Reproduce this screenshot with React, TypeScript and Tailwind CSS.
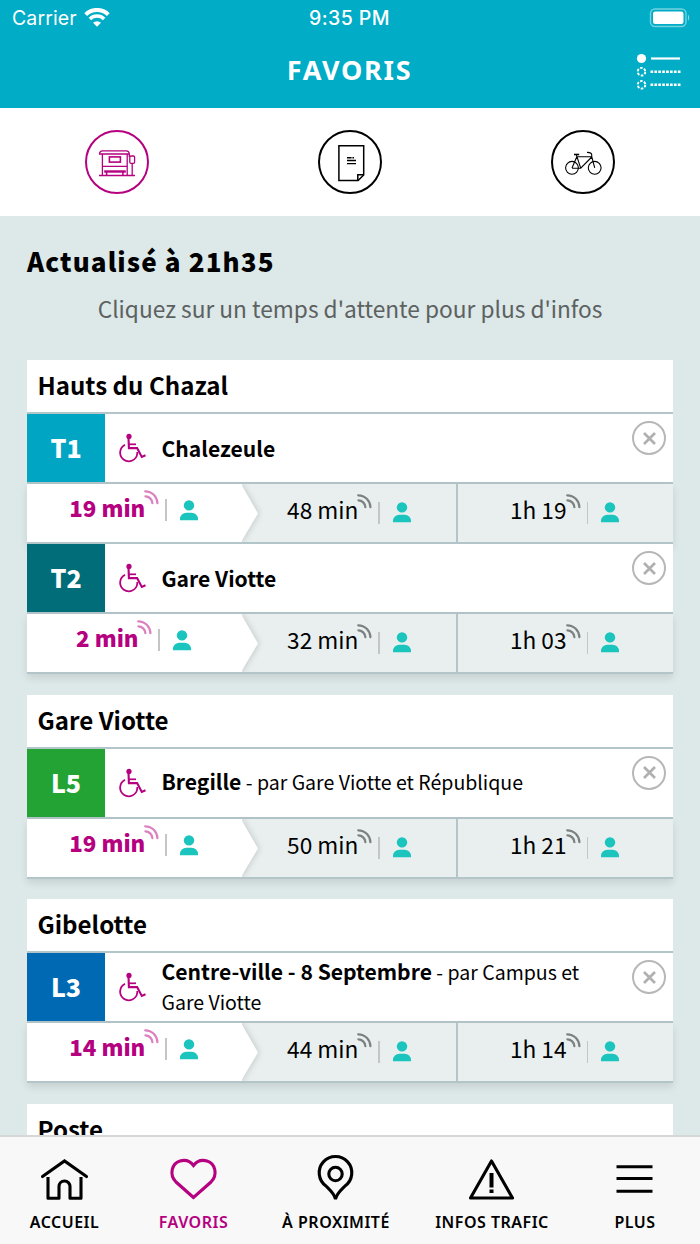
import React from 'react';
import clsx from 'clsx';

interface Line {
  code: string;
  color: string;
  direction: string;
  via?: string;
  times: string[];
}

interface Stop {
  name: string;
  lines: Line[];
}

const STOPS: Stop[] = [
  {
    name: 'Hauts du Chazal',
    lines: [
      { code: 'T1', color: 'bg-[#00a5c3]', direction: 'Chalezeule', times: ['19 min', '48 min', '1h 19'] },
      { code: 'T2', color: 'bg-[#006d78]', direction: 'Gare Viotte', times: ['2 min', '32 min', '1h 03'] },
    ],
  },
  {
    name: 'Gare Viotte',
    lines: [
      {
        code: 'L5',
        color: 'bg-[#22a334]',
        direction: 'Bregille',
        via: 'par Gare Viotte et République',
        times: ['19 min', '50 min', '1h 21'],
      },
    ],
  },
  {
    name: 'Gibelotte',
    lines: [
      {
        code: 'L3',
        color: 'bg-[#0069b4]',
        direction: 'Centre-ville - 8 Septembre',
        via: 'par Campus et Gare Viotte',
        times: ['14 min', '44 min', '1h 14'],
      },
    ],
  },
  { name: 'Poste', lines: [] },
];

function StatusBar() {
  return (
    <div className="grid h-9 grid-cols-3 items-center px-3 font-['Inter'] text-[19.5px] leading-9 text-white">
      <div className="flex items-center gap-[7px]">
        <span className="tracking-[0.1px]">Carrier</span>
        <svg width="26" height="19" viewBox="0 0 26 19" className="-mt-0.5" fill="none" stroke="#fff">
          <path d="M1.7 6.6a16 16 0 0 1 22.6 0" strokeWidth="4" />
          <path d="M5.9 11a10 10 0 0 1 14.2 0" strokeWidth="3.6" />
          <path d="M13 18.8l-4-4a5.7 5.7 0 0 1 8 0z" fill="#fff" stroke="none" />
        </svg>
      </div>
      <span className="-ml-px text-center font-medium tracking-[0.4px]">9:35 PM</span>
      <svg width="42" height="20" viewBox="0 0 42 20" className="-mr-[3px] justify-self-end">
        <rect x="1.5" y="1" width="35.5" height="17.5" rx="4.5" fill="none" stroke="#fff" strokeOpacity=".45" strokeWidth="1.4" />
        <rect x="4" y="3.5" width="30.5" height="12.5" rx="2.2" fill="#fff" />
        <path d="M39 6.500q2.600 3 0 6.500z" fill="#fff" fillOpacity=".5" />
      </svg>
    </div>
  );
}

function ListIcon() {
  return (
    <svg width="46" height="38" viewBox="0 0 46 38" className="mt-[4px]" fill="none" stroke="#fff">
      <circle cx="5.5" cy="5.5" r="4.6" fill="#fff" stroke="none" />
      <path d="M15 5.5h29" strokeWidth="2.2" />
      <circle cx="5.5" cy="18.7" r="3.8" strokeWidth="1.9" strokeDasharray="2.6 1.4" />
      <path d="M14.5 18.7h30.5" strokeWidth="2.4" strokeDasharray="2.7 1.2" />
      <circle cx="5.5" cy="31.8" r="3.8" strokeWidth="1.9" strokeDasharray="2.6 1.4" />
      <path d="M14.5 31.8h30.5" strokeWidth="2.4" strokeDasharray="2.7 1.2" />
    </svg>
  );
}

function ShelterIcon() {
  return (
    <svg width="40" height="30" viewBox="0 0 40 30" fill="none" stroke="#b5007f" strokeWidth="1.3">
      <path d="M2.6 7V6.2Q3 3.8 5.6 3.8h23.600q2.600 0 3 2.400V7z" />
      <path d="M5.4 7v21.5M30.2 7v21.5M32.3 7v3M5.4 19.3h24.8M2 28.5h36" />
      <rect x="12.4" y="9.9" width="11" height="5.2" strokeWidth="1.6" />
      <path d="M7.2 24.5h21.6" strokeWidth="2.4" />
      <path d="M9.6 25v3.5M25.9 25v3.5" strokeWidth="1.5" />
      <rect x="32.8" y="9" width="4.8" height="7.3" rx="1.2" />
      <path d="M35.2 16.3v12.2" />
    </svg>
  );
}

function SheetIcon() {
  return (
    <svg width="34" height="42" viewBox="0 0 34 42" className="shrink-0" fill="none" stroke="#000" strokeWidth="1.5">
      <path d="M5.9 4.8h24.8v29.2l-5.6 5.5H5.9z" />
      <path d="M30.7 33.8h-5.9v5.7" />
      <path d="M14 16.7h4.6M19.4 16.7h1.600M14 19.5h9M14 22.6h9" strokeWidth="1.4" />
    </svg>
  );
}

function BikeIcon() {
  return (
    <svg width="40" height="26" viewBox="0 0 40 26" fill="none" stroke="#000" strokeWidth="1.1">
      <circle cx="9" cy="18.8" r="6.4" />
      <circle cx="31.7" cy="18.8" r="6.4" />
      <path d="M9 19L13.8 7.7M17.7 19.2L13.4 6M9 19.2h8.7L28.8 8M14 7.7h14.7M31.7 18.8L28.7 7.5V5.5Q28.3 3.2 24 3.4" />
      <path d="M11 5.5h5.2" strokeWidth="1.6" />
    </svg>
  );
}

function WheelchairIcon() {
  return (
    <svg width="28" height="30" viewBox="0 0 28 30" fill="none" stroke="#b5007f" strokeWidth="1.8">
      <circle cx="10" cy="3.4" r="2.6" fill="#b5007f" stroke="none" />
      <path d="M9.5 4.5l.4 10.6h8.2l4.7 8.9 3.7-1.7" strokeWidth="2.1" />
      <path d="M9.7 11.3h7.3" strokeWidth="1.7" />
      <path d="M6 11.9a8.6 8.6 0 1 0 12.3 8.6v-1.500" />
    </svg>
  );
}

function SignalIcon() {
  return (
    <svg width="15" height="15" viewBox="0 0 15 15" fill="none" stroke="currentColor" strokeWidth="2.2" strokeLinecap="round">
      <path d="M1.2 1.3C8 1.3 13.2 6.6 13.4 13.2" />
      <path d="M1.4 6.3C5 6.3 8.3 9.6 8.4 13.2" />
    </svg>
  );
}

function PersonIcon() {
  return (
    <svg width="18" height="21" viewBox="0 0 18 21" fill="#1bc5bd">
      <circle cx="9" cy="5.4" r="5.2" />
      <path d="M0 20.3v-1.2a6.4 6.4 0 0 1 6.4-6.4h5.2a6.4 6.4 0 0 1 6.4 6.4v1.2z" />
    </svg>
  );
}

// White tip of the first waiting time, laid over the second cell
function Arrow() {
  return (
    <svg width="26" height="58" viewBox="0 0 26 58" className="absolute left-0 top-0">
      <path
        d="M-4 -4L-1 0L16 29.5L-1 58L-4 62z"
        fill="#fff"
        className="[filter:drop-shadow(1px_0_3px_rgba(0,0,0,0.16))]"
      />
    </svg>
  );
}

function TimeCell({ label, index }: { label: string; index: number }) {
  const next = index === 0;

  return (
    <div
      className={clsx(
        'relative flex justify-center',
        next ? 'bg-white pr-[2px] pt-[6px]' : 'bg-[#e9efef] pt-[8px]',
        index === 2 && 'border-l-2 border-[#b3c5c8] pr-[2px]'
      )}
    >
      {index === 1 && <Arrow />}
      <span
        className={clsx(
          'relative whitespace-pre leading-[35px]',
          next ? 'text-[22.3px] font-black text-[#b5007f]' : 'text-[22.7px] text-black'
        )}
      >
        {label}
      </span>
      <span className={clsx('-ml-px', next ? 'text-[#dc80bf]' : 'pt-[2px] text-[#7b8080]')}>
        <SignalIcon />
      </span>
      <span className={clsx('ml-[6px] h-[22px] w-[1.5px] bg-[#c4c6c6]', next ? 'mt-[9px]' : 'mt-[10px]')} />
      <span className="ml-[13px] mt-[10px]">
        <PersonIcon />
      </span>
    </div>
  );
}

function LineRow({ line }: { line: Line }) {
  return (
    <>
      <div className="flex h-[70px] border-b-2 border-[#b3c5c8] bg-white">
        <div className={clsx('flex w-[78px] items-center justify-center text-[25px] font-black text-white', line.color)}>
          {line.code}
        </div>
        <div className="flex w-[56.5px] items-center pl-[14px]">
          <WheelchairIcon />
        </div>
        <p className={clsx('flex-1 self-center text-[19.55px] leading-[30px]', line.via ? '-mt-px' : 'mt-px')}>
          <strong className="text-[21.1px] font-bold leading-none">{line.direction}</strong>
          {line.via && <> - {line.via}</>}
        </p>
        <button className="ml-[40px] mr-[7px] mt-[7px] flex size-[34px] shrink-0 items-center justify-center rounded-full border-2 border-[#b7b7b7]">
          <svg width="13" height="13" viewBox="0 0 13 13" stroke="#b0b0b0" strokeWidth="2.7">
            <path d="M1 1l11 11M12 1L1 12" />
          </svg>
        </button>
      </div>
      <div className="grid h-[60px] grid-cols-[215px_214px_217px] border-b-2 border-[#b3c5c8] shadow-[0_4px_8px_rgba(0,0,0,0.1)]">
        {line.times.map((time, i) => (
          <TimeCell key={time} label={time} index={i} />
        ))}
      </div>
    </>
  );
}

function StopCard({ stop }: { stop: Stop }) {
  return (
    <section>
      <h2 className="h-[54px] border-b-2 border-[#b3c5c8] bg-white pl-[10.5px] text-[24.1px] font-bold leading-[50px]">
        {stop.name}
      </h2>
      {stop.lines.map(line => (
        <LineRow key={line.code} line={line} />
      ))}
    </section>
  );
}

function NavItem({ label, active, children }: { label: string; active?: boolean; children: React.ReactNode }) {
  return (
    <a className={clsx('flex flex-col items-center pt-[16px]', active ? 'text-[#b5007f]' : 'text-black')}>
      <svg width="52" height="52" viewBox="0.5 0 52 52" fill="none" stroke="currentColor" strokeWidth="3.1">
        {children}
      </svg>
      <span className="mt-[5px] whitespace-nowrap font-['Noto_Sans'] text-[16px] font-semibold leading-6 tracking-[0.5px]">
        {label}
      </span>
    </a>
  );
}

export default function App() {
  return (
    <div className="flex h-[1244px] w-[700px] flex-col overflow-hidden bg-[#dde8e8] font-['Noto_Sans_CJK_SC',sans-serif] text-black">
      <header className="h-[108px] shrink-0 bg-[#00acc6]">
        <StatusBar />
        <div className="grid h-[68px] grid-cols-[1fr_auto_1fr] items-center pr-[18px]">
          <h1 className="col-start-2 pl-[17px] font-['Noto_Sans'] text-[27px] font-bold leading-9 tracking-[1.7px] text-white">
            FAVORIS
          </h1>
          <div className="justify-self-end">
            <ListIcon />
          </div>
        </div>
      </header>

      {/* Favourite type tabs */}
      <div className="grid h-[108px] shrink-0 grid-cols-3 place-items-center bg-white">
        <div className="flex size-[64px] items-center justify-center rounded-full border-2 border-[#b5007f]">
          <ShelterIcon />
        </div>
        <div className="flex size-[64px] items-center justify-center rounded-full border-2 border-black">
          <SheetIcon />
        </div>
        <div className="flex size-[64px] items-center justify-center rounded-full border-2 border-black">
          <BikeIcon />
        </div>
      </div>

      <main className="min-h-0 flex-1 overflow-hidden px-[27px] pt-[26px]">
        <h2 className="text-[26px] font-black leading-[38px] tracking-[1.1px]">Actualisé à 21h35</h2>
        <p className="mt-[10px] text-center text-[22.7px] leading-[38px] text-[#5c6161]">
          Cliquez sur un temps d'attente pour plus d'infos
        </p>
        <div className="mt-[32px] flex flex-col gap-[20.5px]">
          {STOPS.map(stop => (
            <StopCard key={stop.name} stop={stop} />
          ))}
        </div>
      </main>

      <nav className="grid h-[109px] shrink-0 grid-cols-[129px_129px_156px_156px_130px] border-t-2 border-[#d6d8d8] bg-[#f8f8f8]">
        <NavItem label="ACCUEIL">
          <path d="M4 23.5L26 8l22 15.5" strokeLinecap="round" />
          <path d="M9.5 24v21.3h11V33.500a5.500 5.500 0 0 1 11 0v11.800h11V24" strokeLinejoin="round" />
        </NavItem>
        <NavItem label="FAVORIS" active>
          <path d="M26 44.5L8.5 29C1.5 22 4 10.5 12.5 8 18 6.5 23 8.5 26 12.5 29 8.5 34 6.5 39.5 8 48 10.5 50.5 22 43.5 29z" />
        </NavItem>
        <NavItem label="À PROXIMITÉ">
          <path d="M26 46c-1.5-6-5-8.5-9.500-13A16.300 16.300 0 1 1 35.500 33C31 37.500 27.500 40 26 46z" />
          <circle cx="26" cy="21" r="6.7" />
        </NavItem>
        <NavItem label="INFOS TRAFIC">
          <path d="M26 8L47 45H5z" strokeLinejoin="round" />
          <path d="M26 20v14.5M26 36.5v3.5" strokeWidth="4" />
        </NavItem>
        <NavItem label="PLUS">
          <path d="M8 13.7h36M8 25.5h36M8 38.3h36" />
        </NavItem>
      </nav>
    </div>
  );
}
